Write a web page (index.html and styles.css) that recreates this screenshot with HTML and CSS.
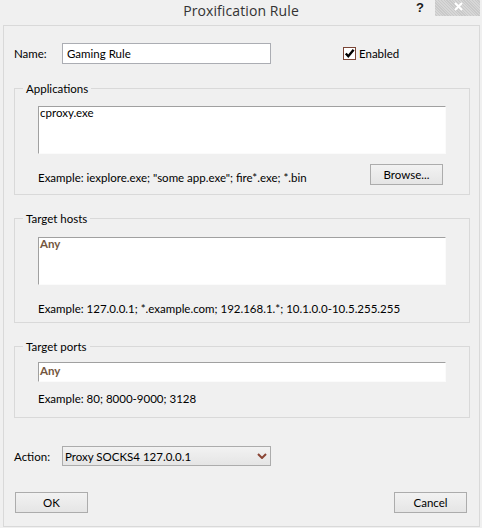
FILE: index.html
```html
<!DOCTYPE html>
<html>
<head>
<meta charset="utf-8">
<title>Proxification Rule</title>
<link rel="stylesheet" href="styles.css">
</head>
<body>
<div class="window">
  <div class="titlebar">
    <div class="tb-spacer"></div>
    <div class="title">Proxification Rule</div>
    <div class="controls">
      <span class="help">?</span>
      <span class="close"><svg width="9" height="9" viewBox="0 0 9 9"><path d="M1 1 L8 8 M8 1 L1 8" stroke="#fff" stroke-width="2" fill="none"/></svg></span>
    </div>
  </div>
  <div class="client">
    <div class="row name-row">
      <span class="lbl">Name:</span>
      <div class="edit name-edit">Gaming Rule</div>
      <div class="check">
        <span class="box"><svg width="11" height="11" viewBox="0 0 11 11"><path d="M1.8 5.5 L4.3 8.2 L9.6 1.8" stroke="#000" stroke-width="2.4" fill="none"/></svg></span>
        <span class="check-text">Enabled</span>
      </div>
    </div>

    <div class="group g-apps">
      <div class="group-title">Applications</div>
      <div class="memo">cproxy.exe</div>
      <div class="group-foot">
        <span class="hint">Example: iexplore.exe; "some app.exe"; fire*.exe; *.bin</span>
        <div class="btn browse">Browse...</div>
      </div>
    </div>

    <div class="group g-hosts">
      <div class="group-title">Target hosts</div>
      <div class="memo"><span class="any">Any</span></div>
      <div class="hint">Example: 127.0.0.1; *.example.com; 192.168.1.*; 10.1.0.0-10.5.255.255</div>
    </div>

    <div class="group g-ports">
      <div class="group-title">Target ports</div>
      <div class="line-edit"><span class="any">Any</span></div>
      <div class="hint">Example: 80; 8000-9000; 3128</div>
    </div>

    <div class="row action-row">
      <span class="lbl">Action:</span>
      <div class="combo">
        <span class="combo-text">Proxy SOCKS4 127.0.0.1</span>
        <svg class="chev" width="10" height="6" viewBox="0 0 10 6"><path d="M1 1 L5 5 L9 1" stroke="#8a4535" stroke-width="2" fill="none"/></svg>
      </div>
    </div>

    <div class="row buttons">
      <div class="btn">OK</div>
      <div class="btn">Cancel</div>
    </div>
  </div>
</div>
</body>
</html>
```
FILE: styles.css
```css
* { box-sizing: border-box; }
html, body { margin: 0; padding: 0; }
body {
  background: #f0f0f0;
  font-family: Lato, "Open Sans", sans-serif;
  font-size: 11.5px;
  color: #000;
}
.window {
  width: 482px;
  height: 528px;
  background: #f0f0f0;
  overflow: hidden;
}
.titlebar {
  height: 25px;
  display: grid;
  grid-template-columns: 1fr auto 1fr;
}
.title {
  font-family: "Open Sans", sans-serif;
  font-size: 14px;
  color: #333;
  line-height: 20px;
  padding-top: 1px;
  letter-spacing: 0.1px;
}
.controls {
  justify-self: end;
  display: flex;
  align-items: flex-start;
}
.help {
  font-family: "Liberation Sans", Arial, sans-serif;
  font-weight: bold;
  font-size: 13px;
  line-height: 15px;
  color: #1a1a1a;
  margin-top: 0;
  margin-right: 11px;
}
.close {
  width: 45px;
  height: 16px;
  margin-right: 2px;
  background-color: #c9c9c9;
  background-image: repeating-linear-gradient(45deg, rgba(255,255,255,0.25) 0 1px, transparent 1px 2px);
  display: flex;
  align-items: center;
  justify-content: center;
  padding-left: 2px;
  padding-bottom: 3px;
}
.client {
  margin: 0 2px 0 3px;
  height: 502px;
  border: 1px solid #d9d9d9;
}
.row { display: flex; align-items: center; }
.name-row { margin-top: 17px; padding-left: 10px; }
.lbl { width: 48px; }
.edit {
  background: #fff;
  border: 1px solid #abadb3;
}
.name-edit {
  width: 209px;
  height: 21px;
  line-height: 19px;
  padding-left: 4px;
}
.check {
  display: flex;
  align-items: center;
  margin-left: 72px;
}
.box {
  width: 13px;
  height: 13px;
  border: 1px solid #7a4536;
  background: #fff;
  display: flex;
  align-items: center;
  justify-content: center;
}
.check-text { margin-left: 3px; }

.group {
  width: 456px;
  margin-left: 10px;
  border: 1px solid #d9d9d9;
  padding-left: 23px;
}
.group-title {
  width: max-content;
  height: 15px;
  line-height: 15px;
  margin-top: -8px;
  margin-left: -15px;
  padding: 0 3px;
  background: #f0f0f0;
}
.memo, .line-edit {
  width: 408px;
  background: #fff;
  border-top: 1px solid #a0a0a0;
  border-left: 1px solid #a0a0a0;
  border-right: 1px solid #fbfbfb;
  border-bottom: 1px solid #fbfbfb;
  padding-left: 1px;
}
.memo {
  height: 48px;
  line-height: 12px;
  padding-top: 0;
}
.line-edit {
  height: 20px;
  line-height: 16px;
}
.any { font-weight: bold; color: #735640; }
.hint { line-height: 15px; }

.g-apps { margin-top: 24px; padding-bottom: 9px; }
.g-apps .memo { margin-top: 10px; }
.group-foot {
  width: 405px;
  margin-top: 10px;
  display: flex;
  justify-content: space-between;
  align-items: flex-end;
}
.g-hosts { margin-top: 23px; padding-bottom: 6px; }
.g-hosts .memo { margin-top: 11px; }
.g-hosts .hint { margin-top: 16px; }
.g-ports { margin-top: 23px; padding-bottom: 11px; }
.g-ports .line-edit { margin-top: 8px; }
.g-ports .hint { margin-top: 9px; }

.btn {
  width: 73px;
  height: 21px;
  border: 1px solid #acacac;
  background: linear-gradient(#f2f2f2, #e5e5e5);
  display: flex;
  align-items: center;
  justify-content: center;
  line-height: 15px;
  padding-bottom: 1px;
}

.action-row { margin-top: 28px; padding-left: 10px; }
.combo {
  width: 209px;
  height: 20px;
  border: 1px solid #acacac;
  background: linear-gradient(#f2f2f2, #e5e5e5);
  display: flex;
  align-items: center;
  justify-content: space-between;
  padding-left: 2px;
  padding-right: 3px;
}
.combo-text { line-height: 15px; }

.buttons {
  margin-top: 26px;
  margin-left: 11px;
  width: 452px;
  justify-content: space-between;
}
```
